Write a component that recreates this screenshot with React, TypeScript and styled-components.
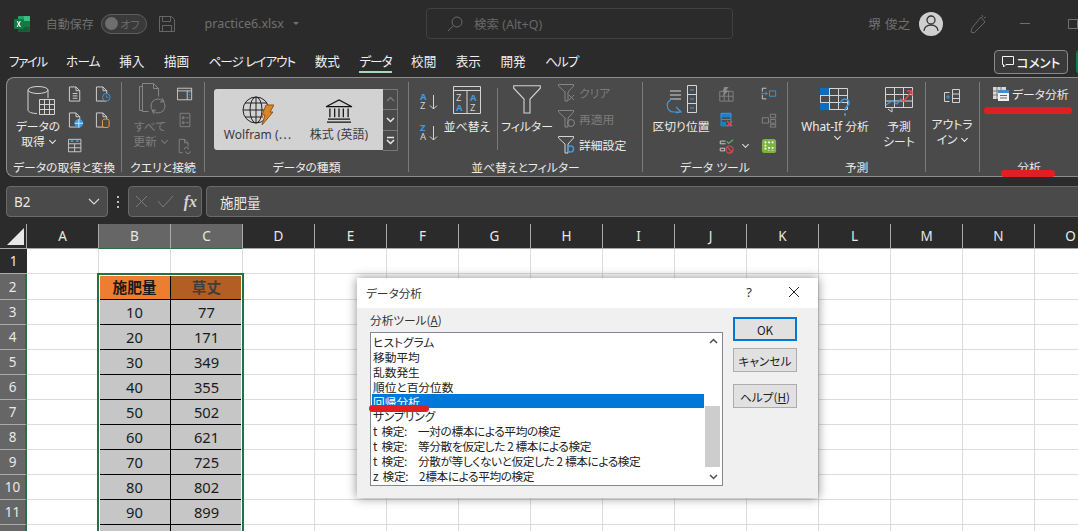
import styled, { createGlobalStyle } from 'styled-components'

const GlobalStyle = createGlobalStyle`
  html, body {
    margin: 0;
    padding: 0;
    background: #fff;
  }
  #root {
    width: 1078px;
    height: 531px;
    overflow: hidden;
  }
  * {
    box-sizing: border-box;
  }
`

const Page = styled.div`
  position: relative;
  width: 1078px;
  height: 531px;
  overflow: hidden;
  background: #2b2b2b;
  color: #e6e6e6;
  font-family: 'Noto Sans', 'Noto Sans CJK JP', sans-serif;
  font-size: 12px;
  font-feature-settings: 'palt';
`

/* title bar */
const TitleBar = styled.div`
  display: flex;
  align-items: center;
  height: 47px;
  padding: 0 0 0 14px;
  color: #707070;
  white-space: nowrap;
`
const AutoSave = styled.span`
  width: 48px;
  margin-left: 16px;
  font-size: 12px;
`
const Toggle = styled.div`
  display: flex;
  align-items: center;
  justify-content: space-between;
  width: 46px;
  height: 20px;
  margin-left: 7px;
  padding: 0 6px 0 3px;
  border: 1px solid #5e5e5e;
  border-radius: 10px;
  background: #3a3a3a;
  font-size: 11px;
  color: #6a6a6a;

  i {
    width: 13px;
    height: 13px;
    border-radius: 50%;
    background: #6e6e6e;
  }
`
const SaveWrap = styled.div`
  display: flex;
  margin-left: 12px;
`
const FileName = styled.span`
  width: 80px;
  margin-left: 30px;
  font-size: 12.5px;
`
const Caret = styled.span`
  width: 0;
  height: 0;
  margin-left: 9px;
  border: 3px solid transparent;
  border-top: 3px solid #707070;
  border-bottom: 0;
`
const SearchBox = styled.div`
  display: flex;
  align-items: center;
  gap: 11px;
  width: 310px;
  height: 31px;
  margin-left: 127px;
  padding-left: 20px;
  border: 1px solid #404040;
  border-radius: 4px;
  font-size: 12.5px;
  color: #686868;
`
const UserName = styled.span`
  width: 41px;
  margin-left: 135px;
  font-size: 12.5px;
  letter-spacing: 0.4px;
`
const Avatar = styled.div`
  display: flex;
  align-items: center;
  justify-content: center;
  width: 24px;
  height: 24px;
  margin-left: 10px;
  border-radius: 50%;
  background: #cfcfcf;
`
const PenWrap = styled.div`
  display: flex;
  margin-left: 27px;
`
const MinimizeMark = styled.span`
  width: 10px;
  height: 1px;
  margin-left: 33px;
  background: #707070;
`
const MaximizeMark = styled.span`
  width: 10px;
  height: 10px;
  margin-left: 38px;
  border: 1px solid #707070;
`

/* tabs */
const TabBar = styled.div`
  display: flex;
  align-items: flex-start;
  height: 30px;
  padding-left: 9px;
`
const Tab = styled.div<{ $active?: boolean; $tight?: number }>`
  position: relative;
  margin-right: 19.5px;
  padding-top: 5px;
  height: 26px;
  font-size: 12.6px;
  line-height: 20px;
  letter-spacing: ${({ $tight }) => $tight || 0}px;
  color: #f0f0f0;
  white-space: nowrap;
  border-bottom: 2px solid ${({ $active }) => ($active ? '#a4d9bb' : 'transparent')};
`
const CommentButton = styled.div`
  position: absolute;
  left: 994px;
  top: 50px;
  display: flex;
  align-items: center;
  justify-content: center;
  gap: 3px;
  width: 74px;
  height: 24px;
  border: 1px solid #8a8a8a;
  border-radius: 4px;
  background: #3a3a3a;
  font-size: 12.5px;
  font-weight: 500;
  color: #f4f4f4;
`
const ShareEdge = styled.div`
  position: absolute;
  left: 1076px;
  top: 50px;
  width: 8px;
  height: 24px;
  border-radius: 4px;
  background: #107c41;
`

/* ribbon */
const Ribbon = styled.div`
  display: flex;
  height: 100px;
  margin-left: 6px;
  border: 1px solid #8e8e8e;
  border-right: 0;
  border-radius: 8px 0 0 8px;
  background: #4a4a4a;
`
const Group = styled.div<{ $w: number }>`
  display: flex;
  flex-direction: column;
  flex: 0 0 auto;
  width: ${({ $w }) => $w}px;
`
const GroupBody = styled.div<{ $pad: number }>`
  display: flex;
  align-items: flex-start;
  height: 80px;
  padding-left: ${({ $pad }) => $pad}px;
`
const GroupLabel = styled.div`
  height: 18px;
  font-size: 11.8px;
  line-height: 18px;
  text-align: center;
  color: #ececec;
  white-space: nowrap;
`
const Separator = styled.div`
  flex: 0 0 1px;
  margin: 4px 0;
  background: #7a7a7a;
`
const BigButton = styled.div<{ $w: number; $ml?: number; $dim?: boolean; $top?: number }>`
  display: flex;
  flex-direction: column;
  align-items: center;
  flex: 0 0 auto;
  width: ${({ $w }) => $w}px;
  margin-left: ${({ $ml }) => $ml || 0}px;
  padding-top: ${({ $top }) => $top ?? 5}px;
  color: ${({ $dim }) => ($dim ? '#7c7c7c' : '#ececec')};
  svg {
    flex: 0 0 auto;
  }
`
const BigIconSlot = styled.div<{ $drop?: number; $shift?: number }>`
  display: flex;
  align-items: flex-end;
  justify-content: center;
  height: ${({ $drop }) => 34 + ($drop || 0)}px;
  margin-bottom: ${({ $drop }) => -($drop || 0)}px;
  padding-left: ${({ $shift }) => $shift || 0}px;
`
const BigText = styled.div<{ $mt?: number }>`
  display: flex;
  flex-direction: column;
  align-items: center;
  margin-top: ${({ $mt }) => $mt ?? 2}px;
  font-size: 11.8px;
  line-height: 15px;
  white-space: nowrap;
`
const Chev = styled.span`
  display: inline-block;
  width: 5px;
  height: 5px;
  margin: 0 0 3px 5px;
  border-right: 1px solid currentColor;
  border-bottom: 1px solid currentColor;
  transform: rotate(45deg);
`
const IconGrid = styled.div<{ $cols: number; $colGap: number; $ml: number }>`
  display: grid;
  grid-template-columns: repeat(${({ $cols }) => $cols}, 16px);
  grid-auto-rows: 26px;
  column-gap: ${({ $colGap }) => $colGap}px;
  margin-left: ${({ $ml }) => $ml}px;
  padding-top: 7px;
`
const GridSlot = styled.div`
  display: flex;
  align-items: center;
  justify-content: center;
  height: 18px;
`
const Gallery = styled.div`
  display: flex;
  width: 184px;
  height: 61px;
  margin-top: 11px;
`
const GalleryItems = styled.div`
  display: flex;
  flex: 1;
  border-radius: 3px 0 0 3px;
  background: #d2d2d2;
  color: #3c3c3c;
`
const GalleryItem = styled.div<{ $w: number }>`
  display: flex;
  flex-direction: column;
  align-items: center;
  width: ${({ $w }) => $w}px;
  padding-top: 6px;
  font-size: 12px;
  line-height: 17px;
  white-space: nowrap;
`
const GalleryIcon = styled.div`
  display: flex;
  align-items: center;
  height: 31px;
`
const GalleryScroll = styled.div`
  display: flex;
  flex-direction: column;
  width: 15px;
`
const ScrollCell = styled.div<{ $dim?: boolean }>`
  display: flex;
  align-items: center;
  justify-content: center;
  flex: 1;
  border: 1px solid #777;
  border-left: 0;
  margin-bottom: -1px;
  color: ${({ $dim }) => ($dim ? '#7a7a7a' : '#e8e8e8')};
`
const AzColumn = styled.div`
  display: flex;
  flex-direction: column;
  gap: 12px;
  margin-left: 0;
  padding-top: 14px;
`
const InnerSeparator = styled.div`
  flex: 0 0 1px;
  height: 62px;
  margin: 10px 0 0 7px;
  background: #7a7a7a;
`
const SmallList = styled.div`
  display: flex;
  flex-direction: column;
  gap: 7px;
  margin-left: 7px;
  padding-top: 5px;
`
const SmallItem = styled.div<{ $dim?: boolean; $mt?: number }>`
  display: flex;
  align-items: center;
  gap: 3px;
  height: 19px;
  margin-top: ${({ $mt }) => $mt || 0}px;
  font-size: 11.8px;
  white-space: nowrap;
  color: ${({ $dim }) => ($dim ? '#7c7c7c' : '#ececec')};
`
const ToolChev = styled.div`
  display: flex;
  align-items: center;
  height: 18px;
  color: #e0e0e0;
  margin-top: 59px;
  margin-left: 4px;
`

/* formula bar */
const FormulaBar = styled.div`
  display: flex;
  align-items: center;
  height: 47px;
  padding: 2px 0 0 6px;
`
const FieldBox = styled.div<{ $w?: number }>`
  display: flex;
  align-items: center;
  flex: ${({ $w }) => ($w ? `0 0 ${$w}px` : '1')};
  height: 31px;
  border: 1px solid #6a6a6a;
  border-radius: 4px;
  background: #4a4a4a;
  color: #e8e8e8;
`
const NameBox = styled(FieldBox)`
  justify-content: space-between;
  padding: 0 7px 0 7px;
  font-size: 13.5px;
`
const Dots = styled.div`
  display: flex;
  flex-direction: column;
  align-items: center;
  gap: 3px;
  width: 20px;

  i {
    width: 2px;
    height: 2px;
    background: #bdbdbd;
  }
`
const FxBox = styled(FieldBox)`
  justify-content: space-between;
  padding: 0 4px 0 6px;
  color: #7c7c7c;
`
const FxLabel = styled.span`
  font-family: 'Liberation Serif', serif;
  font-style: italic;
  font-weight: 700;
  font-size: 16px;
  color: #d4d4d4;
`
const FormulaText = styled(FieldBox)`
  margin-left: 4px;
  margin-right: -8px;
  padding-left: 13px;
  font-size: 13.5px;
`

/* sheet */
const ColHeaderRow = styled.div`
  display: flex;
  height: 25px;
  background: #2b2b2b;
`
const Corner = styled.div`
  flex: 0 0 26px;
  display: flex;
  align-items: flex-end;
  justify-content: flex-end;
  padding: 0 2px 3px 0;
  border-bottom: 1px solid #aaa;
`
const ColHead = styled.div<{ $sel?: boolean }>`
  flex: 0 0 72px;
  display: flex;
  align-items: center;
  justify-content: center;
  border-left: 1px solid #aaa;
  border-bottom: ${({ $sel }) => ($sel ? '1px solid #217346' : '1px solid #aaa')};
  background: ${({ $sel }) => ($sel ? '#666' : 'transparent')};
  font-size: 13.5px;
  color: #e8e8e8;
`
const SheetBody = styled.div`
  position: relative;
  background: #fff;
`
const Row = styled.div<{ $h: number }>`
  display: flex;
  height: ${({ $h }) => $h}px;
`
const RowHead = styled.div<{ $sel?: boolean }>`
  flex: 0 0 27px;
  display: flex;
  align-items: center;
  justify-content: center;
  border-bottom: 1px solid #aaa;
  border-right: ${({ $sel }) => ($sel ? '2px solid #217346' : '0')};
  background: ${({ $sel }) => ($sel ? '#666' : '#2b2b2b')};
  font-size: 13.5px;
  color: #e8e8e8;
`
const Cell = styled.div<{ $kind?: 'body' | 'head' | 'headDark' }>`
  flex: 0 0 72px;
  display: flex;
  align-items: center;
  justify-content: center;
  font-size: 14.7px;
  color: #1a1a1a;
  border-right: 1px solid ${({ $kind }) => ($kind ? '#000' : '#dcdcdc')};
  border-bottom: 1px solid ${({ $kind }) => ($kind ? '#000' : '#dcdcdc')};
  background: ${({ $kind }) =>
    $kind === 'head' ? '#ed7d31' : $kind === 'headDark' ? '#b35e25' : $kind === 'body' ? '#c6c6c6' : '#fff'};
  font-weight: ${({ $kind }) => ($kind === 'head' || $kind === 'headDark' ? 700 : 400)};
  ${({ $kind }) => ($kind === 'headDark' ? 'color: #3e3e3e;' : '')}
`
const Selection = styled.div`
  position: absolute;
  left: 97px;
  top: 24px;
  width: 147px;
  height: 300px;
  border: 2px solid #217346;
  outline: 1px solid #fff;
  outline-offset: -3px;
  pointer-events: none;
`

/* dialog */
const Dialog = styled.div`
  position: absolute;
  left: 357px;
  top: 278px;
  width: 461px;
  height: 220px;
  background: #f0f0f0;
  color: #222;
  box-shadow: 0 0 10px rgba(0, 0, 0, 0.45);
  font-family: 'Noto Sans CJK JP', 'Noto Sans', sans-serif;
`
const DialogTitle = styled.div`
  display: flex;
  align-items: center;
  height: 28px;
  margin-bottom: 2px;
  padding: 0 18px 0 9px;
  background: #fff;
  box-shadow: 0 2px 0 #fff;
  font-size: 11.7px;
  color: #333;
`
const DialogHelp = styled.span`
  margin-left: auto;
  margin-right: 36px;
  font-family: 'Noto Sans', sans-serif;
  font-size: 13px;
`
const DialogBody = styled.div`
  display: flex;
  padding: 4px 21px 0 13px;
`
const ToolColumn = styled.div`
  flex: 0 0 353px;
`
const ToolLabel = styled.div`
  height: 20px;
  font-size: 11.7px;
  line-height: 15px;
  color: #333;

  u {
    text-underline-offset: 1px;
  }
`
const ToolList = styled.div`
  display: flex;
  height: 154px;
  border: 1px solid #828790;
  background: #fff;
`
const Items = styled.div`
  flex: 1;
  padding: 1px 0 0 1px;
`
const Item = styled.div<{ $sel?: boolean; $tight?: boolean }>`
  height: 14.9px;
  padding-left: 1px;
  font-size: 11.7px;
  line-height: 15px;
  letter-spacing: ${({ $tight }) => ($tight ? '-0.4px' : '0')};
  white-space: pre;
  color: ${({ $sel }) => ($sel ? '#fff' : '#222')};
  background: ${({ $sel }) => ($sel ? '#0078d7' : 'transparent')};
`
const ScrollTrack = styled.div`
  display: flex;
  flex-direction: column;
  align-items: center;
  flex: 0 0 18px;
  background: #fff;
`
const ScrollArrow = styled.div`
  display: flex;
  align-items: center;
  justify-content: center;
  height: 17px;
  color: #505050;
`
const ScrollThumbArea = styled.div`
  flex: 1;
  width: 100%;
  padding: 56px 0 0 1px;
`
const ScrollThumb = styled.div`
  width: 15px;
  height: 61px;
  background: #cdcdcd;
`
const DialogButtons = styled.div`
  display: flex;
  flex-direction: column;
  margin-left: 10px;
  padding-top: 5px;
`
const DialogButton = styled.div<{ $primary?: boolean; $mb: number }>`
  display: flex;
  align-items: center;
  justify-content: center;
  width: 64px;
  height: 24px;
  margin-bottom: ${({ $mb }) => $mb}px;
  border: ${({ $primary }) => ($primary ? '2px solid #0078d7' : '1px solid #adadad')};
  background: #e1e1e1;
  font-size: 11.7px;
  color: #222;
`

/* hand drawn red marks */
const RedMark = styled.div<{ $x: number; $y: number; $w: number }>`
  position: absolute;
  left: ${({ $x }) => $x}px;
  top: ${({ $y }) => $y}px;
  width: ${({ $w }) => $w}px;
  height: 7px;
  border-radius: 4px;
  background: #e31e1e;
`

/* icons */
const LIGHT = '#d4d4d4'
const DIM = '#868686'
const BLUE = '#3f9ae0'

function Doc({ children, color = LIGHT }: { children?: React.ReactNode; color?: string }) {
  return (
    <svg width="17" height="18" viewBox="0 0 17 18" fill="none" stroke={color}>
      <path d="M1.500 1.500h7l4 4v11h-11z M8.500 1.500v4h4" />
      {children}
    </svg>
  )
}

function ExcelLogo() {
  return (
    <svg width="16" height="16" viewBox="0 0 16 16">
      <rect x="4" y="0" width="12" height="16" rx="1" fill="#21a366" />
      <rect x="10" y="0" width="6" height="5" fill="#33c481" />
      <rect x="10" y="5" width="6" height="6" fill="#107c41" />
      <rect x="4" y="11" width="12" height="5" fill="#185c37" />
      <rect x="0" y="3" width="10" height="10" rx="1" fill="#107c41" />
      <path d="M2.700 5l1.400 2.900L2.600 11h1.300l.9-2 .9 2H7L5.500 7.900 6.900 5H5.700l-.9 1.900L3.900 5z" fill="#fff" />
    </svg>
  )
}

function SaveIcon() {
  return (
    <svg width="16" height="16" viewBox="0 0 16 16" fill="none" stroke="#666">
      <path d="M.5.5h12l3 3v12H.5z M3.500.5v5h8v-5 M3.500 15.500v-6h9v6" />
    </svg>
  )
}

function DatabaseIcon() {
  return (
    <svg width="28" height="32" viewBox="0 0 28 32" fill="none" stroke={LIGHT}>
      <ellipse cx="11" cy="5" rx="10" ry="3.500" />
      <path d="M1 5v20c0 2 4 3.500 9 3.500 M21 5v8" />
      <path d="M12.500 14.500h15v15h-15z M12.500 19.500h15 M12.500 24.500h15 M17.500 14.500v15 M22.500 14.500v15" />
    </svg>
  )
}

function RefreshAllIcon() {
  return (
    <svg width="30" height="34" viewBox="0 0 30 34" fill="none" stroke={DIM}>
      <path d="M1.500 3.500h3 M1.500 3.500v24h3" />
      <path d="M4.500 .5h11l5 5v8 M15.500 .5v5h5 M4.500 .5v28h6" />
      <circle cx="20" cy="23" r="7" />
      <path d="M24 15l2 3.500-4 .5 M16 31l-2-3.500 4-.5" />
    </svg>
  )
}

function GlobeBolt() {
  return (
    <svg width="32" height="31" viewBox="0 0 32 31" fill="none">
      <g stroke="#222">
        <circle cx="14" cy="15" r="13" />
        <ellipse cx="14" cy="15" rx="6" ry="13" />
        <path d="M14 2v26 M1 15h26 M3 8h22 M3 22h18" />
      </g>
      <path d="M24 10h8l-4 7h3l-11 13 3-10h-3z" fill="#d8862a" stroke="#8e5518" />
    </svg>
  )
}

function BankIcon() {
  return (
    <svg width="28" height="24" viewBox="0 0 29 25" fill="none" stroke="#111" strokeWidth="1.300">
      <path d="M1 8L14.500 1 28 8z M2 24h25 M3 21h23 M5 10v9 M10 10v9 M14.500 10v9 M19 10v9 M24 10v9" />
    </svg>
  )
}

function AzIcon({ top, bottom }: { top: string; bottom: string }) {
  return (
    <svg width="19" height="19" viewBox="0 0 19 19" overflow="visible">
      <text x="0" y="8" fontSize="9.500" fontWeight="700" fill={BLUE} fontFamily="Noto Sans">{top}</text>
      <text x="0" y="17" fontSize="9.500" fill={LIGHT} fontFamily="Noto Sans">{bottom}</text>
      <path d="M13.500 3v14 M10 13.500l3.500 3.500 3.500-3.500" stroke={LIGHT} fill="none" />
    </svg>
  )
}

function SortIcon() {
  return (
    <svg width="28" height="28" viewBox="0 0 28 28" fill="none" stroke={LIGHT}>
      <path d="M.5.5h27v27H.5z M.5 4.500h27 M14 4.500v23" />
      <text x="3" y="15" fontSize="9.500" fill={LIGHT} stroke="none" fontFamily="Noto Sans">Z</text>
      <text x="3" y="25" fontSize="9.500" fontWeight="700" fill={BLUE} stroke="none" fontFamily="Noto Sans">A</text>
      <text x="17" y="15" fontSize="9.500" fontWeight="700" fill={BLUE} stroke="none" fontFamily="Noto Sans">A</text>
      <text x="17" y="25" fontSize="9.500" fill={LIGHT} stroke="none" fontFamily="Noto Sans">Z</text>
    </svg>
  )
}

function FunnelIcon() {
  return (
    <svg width="28" height="29" viewBox="0 0 28 29" fill="none" stroke={LIGHT} strokeWidth="1.100">
      <path d="M.7.7h26.600v2.500L17 14v14h-6V14L.7 3.200z" />
    </svg>
  )
}

function SmallFunnel({ color, children }: { color: string; children?: React.ReactNode }) {
  return (
    <svg width="18" height="18" viewBox="0 0 18 18" fill="none" stroke={color}>
      <path d="M.5.5h15v1.500L10 8v9H7V8L.5 2z" />
      {children}
    </svg>
  )
}

function SplitIcon() {
  return (
    <svg width="31" height="29" viewBox="0 0 31 29" fill="none">
      <path d="M4 6h11 M4 10h11 M4 14h11 M21.500.5h9v27h-9z M21.500 9.500h9 M21.500 18.500h9" stroke={LIGHT} />
      <path d="M24 5h4 M24 14h4 M24 23h4" stroke={BLUE} />
      <path d="M8 14c-9 0-9 13 0 13h6 M10 22l5 5-5 1" stroke={BLUE} strokeWidth="1.200" />
    </svg>
  )
}

function ToolIcon({ kind }: { kind: string }) {
  return (
    <svg width="18" height="18" viewBox="0 0 18 18" fill="none" stroke={LIGHT}>
      {kind === 'flash' && (
        <>
          <path d="M2 6h15v11H2z M2 11.500h15 M7 6v11 M12 6v11" stroke={DIM} />
          <path d="M7 1h5l-3 4h3l-7 7 2-5H5z" fill="#8a8a8a" stroke="none" />
        </>
      )}
      {kind === 'dup' && (
        <>
          <rect x="3" y="1" width="12" height="5" fill="#1a7fd0" stroke="none" />
          <path d="M3.500 1.500h11v14h-11z M3.500 8.500h11" stroke={BLUE} />
          <rect x="3" y="11" width="6" height="5" fill="#1a7fd0" stroke="none" />
          <path d="M10 10l6 6 M16 10l-6 6" stroke="#e0484d" strokeWidth="1.500" />
        </>
      )}
      {kind === 'valid' && (
        <>
          <path d="M2.500 3.500h6 M2.500 3.500v3h6 M2.500 11.500h5v3h-5z" />
          <path d="M10 4l2 2 5-4" stroke="#66bb6a" strokeWidth="1.300" />
          <circle cx="13" cy="13" r="4" stroke="#e0484d" strokeWidth="1.300" />
          <path d="M10 10l6 6" stroke="#e0484d" strokeWidth="1.300" />
        </>
      )}
      {kind === 'merge' && (
        <>
          <path d="M6 2.500H1.500v4 M1.500 10v4.500H6" />
          <path d="M0 8.500h7 M5 6.500l2 2-2 2" stroke={BLUE} />
          <path d="M9.500 5.500h7v6h-7z" stroke={BLUE} />
        </>
      )}
      {kind === 'rel' && (
        <path d="M1.500 6.500h7v6h-7z M10.500 2.500h6v4h-6z M10.500 8.500h6v4h-6z M10.500 14h6v3h-6z" stroke={DIM} />
      )}
      {kind === 'model' && (
        <>
          <rect x="1" y="1" width="16" height="16" rx="3" fill="#7cb342" stroke="none" />
          <path d="M5 4v9 M9 4v3 M9 10v4 M13 4v3 M13 10v4" stroke="#fff" strokeWidth="2" strokeDasharray="2 1.500" />
        </>
      )}
      {kind === 'sideTable' && (
        <>
          <path d="M.5 2.500h16v13H.5z M.5 5.500h16" />
          <path d="M13 7h2 M13 10h2 M13 13h2" stroke={BLUE} />
          <path d="M11.500 5.500v10" />
        </>
      )}
      {kind === 'props' && (
        <path d="M3.500 1.500h11v15h-11z M6 5.500h2v2H6z M6 11h2v2H6z M10 6.500h3 M10 12h3" stroke={DIM} />
      )}
      {kind === 'links' && (
        <>
          <path d="M2.500 1.500h6l4 4v4 M8.500 1.500v4h4 M2.500 1.500v15h4" stroke={DIM} />
          <path d="M8 13a2.500 2.500 0 0 1 5 0 M10 15a2.500 2.500 0 0 0 5 0" stroke={DIM} />
        </>
      )}
      {kind === 'tableTop' && (
        <>
          <path d="M.5 1.500h14v14H.5z M.5 6.500h14 M.5 11h14 M7.500 6.500v9" />
          <path d="M3 3.500h3 M9 3.500h3" stroke={BLUE} strokeWidth="2" />
        </>
      )}
    </svg>
  )
}

function WhatIfIcon() {
  return (
    <svg width="31" height="29" viewBox="0 0 31 29" fill="none">
      <path d="M.5.5h27v21H.5z M.5 7.500h27 M.5 14.500h27 M9.500.5v21 M18.500.5v21" stroke={LIGHT} />
      <rect x="0" y="0" width="9" height="7" fill="#0f6cbd" />
      <rect x="0" y="15" width="9" height="7" fill="#0f6cbd" />
      <path d="M21 15c0-5 8-5 8 0 0 3-4 3-4 8 M25 25v3" stroke={BLUE} strokeWidth="1.600" />
    </svg>
  )
}

function ForecastIcon() {
  return (
    <svg width="28" height="27" viewBox="0 0 28 27" fill="none">
      <path d="M.5.5h27v20H.5z M.5 7.500h27 M.5 14h27 M9.500.5v20 M18.500.5v20" stroke={LIGHT} />
      <path d="M1 18l6-4 5 3 4-5" stroke={BLUE} strokeWidth="1.300" />
      <path d="M16 12l3 2 7-9 M22 4h5v5" stroke="#e0484d" strokeWidth="1.300" />
      <path d="M7 20v5l-4-3" stroke={LIGHT} />
    </svg>
  )
}

function OutlineIcon() {
  return (
    <svg width="17" height="14" viewBox="0 0 17 14" fill="none">
      <path d="M5.500 3.500H.5v9h5 M8.500.5h7v13h-7z M8.500 5h7 M8.500 9.500h7" stroke={LIGHT} />
      <path d="M2 8h4 M4 6v4" stroke={BLUE} />
    </svg>
  )
}

function AnalysisIcon() {
  return (
    <svg width="16" height="14" viewBox="0 0 16 14" fill="none">
      <rect x="0" y="0" width="13" height="12" fill="#d8d8d8" />
      <path d="M4 0v12 M8 0v12 M0 4h13 M0 8h13" stroke="#7a7a7a" />
      <rect x="5" y="3" width="11" height="11" fill="#f1f1f1" />
      <rect x="5" y="3" width="11" height="3" fill="#3a8fd8" />
      <path d="M7 8.500h7 M7 11h7" stroke="#666" />
    </svg>
  )
}

function UpDownIcon({ dir }: { dir: 'up' | 'down' | 'more' }) {
  return (
    <svg width="9" height="9" viewBox="0 0 9 9" fill="none" stroke="currentColor" strokeWidth="1.500">
      {dir === 'up' && <path d="M1 6l3.500-3.500L8 6" />}
      {dir === 'down' && <path d="M1 3l3.500 3.500L8 3" />}
      {dir === 'more' && <path d="M1 1.500h7 M1 4l3.500 3.500L8 4" />}
    </svg>
  )
}

const COLUMNS = 'ABCDEFGHIJKLMNO'.split('')
const TABS: [string, number][] = [
  ['ファイル', -1.5],
  ['ホーム', -0.8],
  ['挿入', 0],
  ['描画', 0],
  ['ページ レイアウト', -1],
  ['数式', 0],
  ['データ', -1],
  ['校閲', 0],
  ['表示', 0],
  ['開発', 0],
  ['ヘルプ', -1],
]
const ROWS: [number, string, string][] = [
  [3, '10', '77'],
  [4, '20', '171'],
  [5, '30', '349'],
  [6, '40', '355'],
  [7, '50', '502'],
  [8, '60', '621'],
  [9, '70', '725'],
  [10, '80', '802'],
  [11, '90', '899'],
]
const TOOLS = [
  'ヒストグラム',
  '移動平均',
  '乱数発生',
  '順位と百分位数',
  '回帰分析',
  'サンプリング',
  't  検定:     一対の標本による平均の検定',
  't  検定:     等分散を仮定した 2 標本による検定',
  't  検定:     分散が等しくないと仮定した 2 標本による検定',
  'z  検定:     2標本による平均の検定',
]

export default function App(): JSX.Element {
  return (
    <Page>
      <GlobalStyle />
      <TitleBar>
        <ExcelLogo />
        <AutoSave>自動保存</AutoSave>
        <Toggle>
          <i />
          オフ
        </Toggle>
        <SaveWrap>
          <SaveIcon />
        </SaveWrap>
        <FileName>practice6.xlsx</FileName>
        <Caret />
        <SearchBox>
          <svg width="16" height="16" viewBox="0 0 16 16" fill="none" stroke="#6a6a6a">
            <circle cx="10" cy="6" r="5" />
            <path d="M6 10l-5 5" />
          </svg>
          検索 (Alt+Q)
        </SearchBox>
        <UserName>堺 俊之</UserName>
        <Avatar>
          <svg width="16" height="17" viewBox="0 0 16 17" fill="none" stroke="#333" strokeWidth="1.300">
            <circle cx="8" cy="5" r="4" />
            <path d="M1 16c0-8 14-8 14 0" />
          </svg>
        </Avatar>
        <PenWrap>
          <svg width="17" height="20" viewBox="0 0 17 20" fill="none" stroke="#666">
            <path d="M11 3L2 14l-1 4 3 1 3-3 8-8z M12 1l1 2 M16 3l-2 1" />
          </svg>
        </PenWrap>
        <MinimizeMark />
        <MaximizeMark />
      </TitleBar>

      <TabBar>
        {TABS.map(([tab, tight]) => (
          <Tab key={tab} $active={tab === 'データ'} $tight={tight}>
            {tab}
          </Tab>
        ))}
      </TabBar>
      <CommentButton>
        <svg width="12" height="12" viewBox="0 0 12 12" fill="none" stroke="#f4f4f4">
          <path d="M.5.5h11v8H4L1.500 11V8.500h-1z" />
        </svg>
        コメント
      </CommentButton>
      <ShareEdge />

      <Ribbon>
        <Group $w={114}>
          <GroupBody $pad={9}>
            <BigButton $w={44}>
              <BigIconSlot $shift={6}>
                <DatabaseIcon />
              </BigIconSlot>
              <BigText>
                <span>データの</span>
                <span>
                  取得
                  <Chev />
                </span>
              </BigText>
            </BigButton>
            <IconGrid $cols={2} $colGap={11} $ml={8}>
              <GridSlot>
                <Doc>
                  <path d="M5 8.500h5 M5 11h5 M5 13.500h5" />
                </Doc>
              </GridSlot>
              <GridSlot>
                <Doc>
                  <circle cx="12" cy="12.500" r="4" fill="#4a4a4a" stroke={BLUE} />
                  <path d="M12 10.500v2h2" stroke={BLUE} />
                </Doc>
              </GridSlot>
              <GridSlot>
                <Doc>
                  <circle cx="11.500" cy="12.500" r="4.500" fill={BLUE} stroke="none" />
                  <path d="M7 12.500h9 M11.500 8v9" stroke="#d8e8f8" />
                </Doc>
              </GridSlot>
              <GridSlot>
                <Doc>
                  <path d="M8 9.500c0-2 7-2 7 0v6c0 2-7 2-7 0z" fill="#4a4a4a" stroke="#f2a33a" />
                </Doc>
              </GridSlot>
              <GridSlot>
                <ToolIcon kind="tableTop" />
              </GridSlot>
            </IconGrid>
          </GroupBody>
          <GroupLabel>データの取得と変換</GroupLabel>
        </Group>
        <Separator />
        <Group $w={82}>
          <GroupBody $pad={10}>
            <BigButton $w={36} $dim>
              <BigIconSlot $shift={5}>
                <RefreshAllIcon />
              </BigIconSlot>
              <BigText>
                <span>すべて</span>
                <span>
                  更新
                  <Chev />
                </span>
              </BigText>
            </BigButton>
            <IconGrid $cols={1} $colGap={0} $ml={9}>
              <GridSlot>
                <ToolIcon kind="sideTable" />
              </GridSlot>
              <GridSlot>
                <ToolIcon kind="props" />
              </GridSlot>
              <GridSlot>
                <ToolIcon kind="links" />
              </GridSlot>
            </IconGrid>
          </GroupBody>
          <GroupLabel>クエリと接続</GroupLabel>
        </Group>
        <Separator />
        <Group $w={203}>
          <GroupBody $pad={9}>
            <Gallery>
              <GalleryItems>
                <GalleryItem $w={87}>
                  <GalleryIcon>
                    <GlobeBolt />
                  </GalleryIcon>
                  Wolfram (⋯
                </GalleryItem>
                <GalleryItem $w={76}>
                  <GalleryIcon>
                    <BankIcon />
                  </GalleryIcon>
                  株式 (英語)
                </GalleryItem>
              </GalleryItems>
              <GalleryScroll>
                <ScrollCell $dim>
                  <UpDownIcon dir="up" />
                </ScrollCell>
                <ScrollCell>
                  <UpDownIcon dir="down" />
                </ScrollCell>
                <ScrollCell>
                  <UpDownIcon dir="more" />
                </ScrollCell>
              </GalleryScroll>
            </Gallery>
          </GroupBody>
          <GroupLabel>データの種類</GroupLabel>
        </Group>
        <Separator />
        <Group $w={233}>
          <GroupBody $pad={11}>
            <AzColumn>
              <AzIcon top="A" bottom="Z" />
              <AzIcon top="Z" bottom="A" />
            </AzColumn>
            <BigButton $w={46} $ml={5} $top={2}>
              <BigIconSlot>
                <SortIcon />
              </BigIconSlot>
              <BigText $mt={5}>並べ替え</BigText>
            </BigButton>
            <InnerSeparator />
            <BigButton $w={48} $ml={5} $top={2}>
              <BigIconSlot>
                <FunnelIcon />
              </BigIconSlot>
              <BigText $mt={5}>フィルター</BigText>
            </BigButton>
            <SmallList>
              <SmallItem $dim>
                <SmallFunnel color={DIM}>
                  <path d="M11 11l5 5 M16 11l-5 5" />
                </SmallFunnel>
                クリア
              </SmallItem>
              <SmallItem $dim>
                <SmallFunnel color={DIM}>
                  <circle cx="13" cy="13" r="3.500" />
                </SmallFunnel>
                再適用
              </SmallItem>
              <SmallItem>
                <SmallFunnel color={LIGHT}>
                  <circle cx="12.500" cy="13" r="3" stroke={BLUE} strokeWidth="1.500" />
                </SmallFunnel>
                詳細設定
              </SmallItem>
            </SmallList>
          </GroupBody>
          <GroupLabel>並べ替えとフィルター</GroupLabel>
        </Group>
        <Separator />
        <Group $w={144}>
          <GroupBody $pad={8}>
            <BigButton $w={60} $top={2}>
              <BigIconSlot>
                <SplitIcon />
              </BigIconSlot>
              <BigText $mt={5}>区切り位置</BigText>
            </BigButton>
            <IconGrid $cols={1} $colGap={0} $ml={7}>
              <GridSlot>
                <ToolIcon kind="flash" />
              </GridSlot>
              <GridSlot>
                <ToolIcon kind="dup" />
              </GridSlot>
              <GridSlot>
                <ToolIcon kind="valid" />
              </GridSlot>
            </IconGrid>
            <ToolChev>
              <Chev />
            </ToolChev>
            <IconGrid $cols={1} $colGap={0} $ml={13}>
              <GridSlot>
                <ToolIcon kind="merge" />
              </GridSlot>
              <GridSlot>
                <ToolIcon kind="rel" />
              </GridSlot>
              <GridSlot>
                <ToolIcon kind="model" />
              </GridSlot>
            </IconGrid>
          </GroupBody>
          <GroupLabel>データ ツール</GroupLabel>
        </Group>
        <Separator />
        <Group $w={137}>
          <GroupBody $pad={8}>
            <BigButton $w={78} $top={2}>
              <BigIconSlot $drop={3}>
                <WhatIfIcon />
              </BigIconSlot>
              <BigText $mt={5}>
                <span>What-If 分析</span>
                <Chev />
              </BigText>
            </BigButton>
            <BigButton $w={44} $ml={3} $top={2}>
              <BigIconSlot>
                <ForecastIcon />
              </BigIconSlot>
              <BigText $mt={5}>
                <span>予測</span>
                <span>シート</span>
              </BigText>
            </BigButton>
          </GroupBody>
          <GroupLabel>予測</GroupLabel>
        </Group>
        <Separator />
        <Group $w={53}>
          <GroupBody $pad={4}>
            <BigButton $w={44} $top={2}>
              <BigIconSlot $drop={-11}>
                <OutlineIcon />
              </BigIconSlot>
              <BigText $mt={3}>
                <span>アウトラ</span>
                <span>
                  イン
                  <Chev />
                </span>
              </BigText>
            </BigButton>
          </GroupBody>
        </Group>
        <Separator />
        <Group $w={98}>
          <GroupBody $pad={13}>
            <SmallItem $mt={6}>
              <AnalysisIcon />
              データ分析
            </SmallItem>
          </GroupBody>
          <GroupLabel>分析</GroupLabel>
        </Group>
      </Ribbon>

      <FormulaBar>
        <NameBox $w={102}>
          B2
          <svg width="12" height="7" viewBox="0 0 12 7" fill="none" stroke="#d8d8d8" strokeWidth="1.200">
            <path d="M1 1l5 5 5-5" />
          </svg>
        </NameBox>
        <Dots>
          <i />
          <i />
          <i />
        </Dots>
        <FxBox $w={74}>
          <svg width="13" height="13" viewBox="0 0 13 13" fill="none" stroke="#7c7c7c">
            <path d="M1 1l11 11 M12 1L1 12" />
          </svg>
          <svg width="17" height="13" viewBox="0 0 17 13" fill="none" stroke="#7c7c7c">
            <path d="M1 6l5 6L16 1" />
          </svg>
          <FxLabel>fx</FxLabel>
        </FxBox>
        <FormulaText>施肥量</FormulaText>
      </FormulaBar>

      <ColHeaderRow>
        <Corner>
          <svg width="17" height="17" viewBox="0 0 17 17">
            <path d="M17 0v17H0z" fill="#e8e8e8" />
          </svg>
        </Corner>
        {COLUMNS.map((col) => (
          <ColHead key={col} $sel={col === 'B' || col === 'C'}>
            {col}
          </ColHead>
        ))}
      </ColHeaderRow>

      <SheetBody>
        <Row $h={25}>
          <RowHead>1</RowHead>
          {COLUMNS.map((col) => (
            <Cell key={col} />
          ))}
        </Row>
        <Row $h={26}>
          <RowHead $sel>2</RowHead>
          <Cell />
          <Cell $kind="head">施肥量</Cell>
          <Cell $kind="headDark">草丈</Cell>
          {COLUMNS.slice(3).map((col) => (
            <Cell key={col} />
          ))}
        </Row>
        {ROWS.map(([n, b, c]) => (
          <Row key={n} $h={25}>
            <RowHead $sel>{n}</RowHead>
            <Cell />
            <Cell $kind="body">{b}</Cell>
            <Cell $kind="body">{c}</Cell>
            {COLUMNS.slice(3).map((col) => (
              <Cell key={col} />
            ))}
          </Row>
        ))}
        <Row $h={25}>
          <RowHead $sel />
          <Cell />
          <Cell $kind="body" />
          <Cell $kind="body" />
          {COLUMNS.slice(3).map((col) => (
            <Cell key={col} />
          ))}
        </Row>
        <Selection />
      </SheetBody>

      <RedMark $x={984} $y={107} $w={88} />
      <RedMark $x={1001} $y={170} $w={54} />

      <Dialog>
        <DialogTitle>
          データ分析
          <DialogHelp>?</DialogHelp>
          <svg width="12" height="12" viewBox="0 0 12 12" fill="none" stroke="#222">
            <path d="M1 1l10 10 M11 1L1 11" />
          </svg>
        </DialogTitle>
        <DialogBody>
          <ToolColumn>
            <ToolLabel>
              分析ツール(<u>A</u>)
            </ToolLabel>
            <ToolList>
              <Items>
                {TOOLS.map((tool, i) => (
                  <Item key={tool} $sel={tool === '回帰分析'} $tight={i > 5}>
                    {tool}
                  </Item>
                ))}
              </Items>
              <ScrollTrack>
                <ScrollArrow>
                  <UpDownIcon dir="up" />
                </ScrollArrow>
                <ScrollThumbArea>
                  <ScrollThumb />
                </ScrollThumbArea>
                <ScrollArrow>
                  <UpDownIcon dir="down" />
                </ScrollArrow>
              </ScrollTrack>
            </ToolList>
          </ToolColumn>
          <DialogButtons>
            <DialogButton $primary $mb={7}>
              OK
            </DialogButton>
            <DialogButton $mb={12}>キャンセル</DialogButton>
            <DialogButton $mb={0}>
              <span>
                ヘルプ(<u>H</u>)
              </span>
            </DialogButton>
          </DialogButtons>
        </DialogBody>
        <RedMark $x={12} $y={127} $w={60} />
      </Dialog>
    </Page>
  )
}
